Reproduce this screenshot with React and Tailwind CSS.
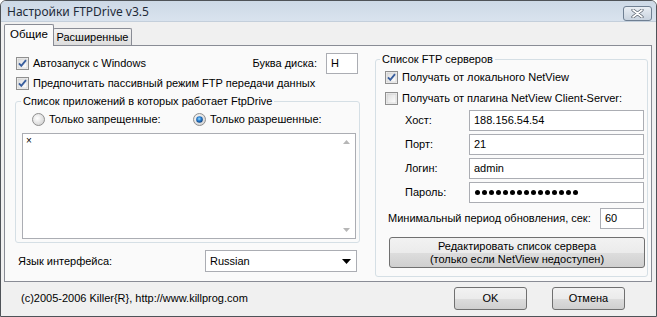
import React from "react";

const F = { fontFamily: '"Liberation Sans", Arial, sans-serif' };

function Check({ checked }) {
  return (
    <svg width="13" height="13" viewBox="0 0 13 13" className="shrink-0">
      <defs>
        <linearGradient id="cbg" x1="0" y1="0" x2="1" y2="1">
          <stop offset="0" stopColor="#dcdcdc" />
          <stop offset="1" stopColor="#ffffff" />
        </linearGradient>
      </defs>
      <rect x="0.5" y="0.5" width="12" height="12" fill="#f4f4f4" stroke="#8f8f8f" />
      <rect x="2" y="2" width="9" height="9" fill="url(#cbg)" stroke="#c8c8c8" strokeWidth="0.6" />
      {checked && (
        <path d="M3 6.3 L5.3 8.8 L10 3.2" fill="none" stroke="#3a5f9e" strokeWidth="1.9" />
      )}
    </svg>
  );
}

function Radio({ checked }) {
  return (
    <svg width="13" height="13" viewBox="0 0 13 13" className="shrink-0">
      <defs>
        <radialGradient id="rbg" cx="0.4" cy="0.4" r="0.7">
          <stop offset="0" stopColor="#ffffff" />
          <stop offset="1" stopColor="#cfcfcf" />
        </radialGradient>
        <radialGradient id="rdot" cx="0.45" cy="0.4" r="0.6">
          <stop offset="0" stopColor="#9fe0ff" />
          <stop offset="0.5" stopColor="#2a7fd0" />
          <stop offset="1" stopColor="#0c3f7c" />
        </radialGradient>
      </defs>
      <circle cx="6.5" cy="6.5" r="6" fill="url(#rbg)" stroke="#8f8f8f" />
      {checked && <circle cx="6.5" cy="6.5" r="3.3" fill="url(#rdot)" />}
    </svg>
  );
}

function Input({ value, className = "", password }) {
  return (
    <div
      className={`h-[21px] bg-white border border-[#abadb3] flex items-center pl-[4px] text-[11px] text-black ${className}`}
    >
      {password ? (
        <span className="flex gap-[2px] pl-[1px]">
          {Array.from({ length: 15 }).map((_, i) => (
            <span key={i} className="w-[5px] h-[5px] rounded-full bg-black inline-block" />
          ))}
        </span>
      ) : (
        value
      )}
    </div>
  );
}

function Button({ children, className = "" }) {
  return (
    <div
      className={`border border-[#707070] rounded-[3px] bg-[linear-gradient(#f2f2f2,#ebebeb_50%,#dddddd_51%,#cfcfcf)] flex flex-col items-center justify-center text-[11px] text-black leading-[13px] ${className}`}
    >
      {children}
    </div>
  );
}

export default function App() {
  return (
    <div
      style={F}
      className="w-[657px] h-[317px] border border-[#4f5358] rounded-t-[6px] overflow-hidden bg-[#f0f0f0] flex flex-col text-[11px] text-black"
    >
      {/* Title bar */}
      <div className="h-[21px] shrink-0 flex items-center pl-[6px] pr-[4px] bg-[linear-gradient(#cdd9e6,#d9e3ee)] border-b border-[#c4cfdb]">
        <span className="text-[12px] text-[#1e2a38] mt-[1px]" style={{ fontFamily: '"Noto Sans", "Open Sans", sans-serif' }}>
          Настройки FTPDrive v3.5
        </span>
        <div className="ml-auto mt-[4px] w-[29px] h-[15px] border border-[#6f7f92] rounded-[3px] bg-[linear-gradient(#e9eef4,#c9d3df)] flex items-center justify-center">
          <svg width="13" height="9" viewBox="0 0 13 9">
            <path d="M2 1 L11 8 M11 1 L2 8" stroke="#5b6470" strokeWidth="3.2" strokeLinecap="round" />
            <path d="M2 1 L11 8 M11 1 L2 8" stroke="#ffffff" strokeWidth="1.6" strokeLinecap="round" />
          </svg>
        </div>
      </div>

      {/* Body */}
      <div className="flex-1 flex flex-col pl-[3px] pt-[2px]">
        {/* Tabs */}
        <div className="flex items-end h-[22px] relative z-10 -mb-[1px]">
          <div className="h-[22px] w-[50px] bg-[#fafafa] border border-[#898c95] border-b-0 rounded-t-[2px] flex items-center justify-center text-[11.5px] pb-[1px]">
            Общие
          </div>
          <div className="h-[17px] w-[79px] -ml-[1px] mb-[1px] bg-[linear-gradient(#f3f3f3,#dddddd)] border border-[#898c95] border-b-0 rounded-t-[2px] flex items-center justify-center text-[11px]">
            Расширенные
          </div>
        </div>

        {/* Panel */}
        <div className="w-[648px] h-[237px] border border-[#898c95] bg-[#fafafa] flex">
          {/* Left column */}
          <div className="w-[362px] flex flex-col">
            <div className="mt-[7px] h-[21px] flex items-center pl-[11px]">
              <Check checked />
              <span className="ml-[4px]">Автозапуск с Windows</span>
              <span className="ml-auto mr-[9px]">Буква диска:</span>
              <Input value="H" className="w-[32px] mr-[9px]" />
            </div>
            <div className="mt-[2px] h-[14px] flex items-center pl-[11px]">
              <Check checked />
              <span className="ml-[4px]">Предпочитать пассивный режим FTP передачи данных</span>
            </div>
            <fieldset className="ml-[10px] mt-[5px] w-[345px] border border-[#d5dfe5] rounded-[3px] pb-[3px]">
              <legend className="ml-[5px] px-[2px] leading-[12px]">Список приложений в которых работает FtpDrive</legend>
              <div className="mt-[5px] h-[14px] flex items-center pl-[16px]">
                <div className="w-[161px] flex items-center">
                  <Radio />
                  <span className="ml-[4px]">Только запрещенные:</span>
                </div>
                <Radio checked />
                <span className="ml-[4px]">Только разрешенные:</span>
              </div>
              <div className="ml-[6px] mt-[7px] w-[334px] h-[106px] bg-white border border-[#abadb3] flex">
                <div className="flex-1 pl-[3px] pt-[1px] text-[10px] leading-[12px]">×</div>
                <div className="w-[17px] flex flex-col justify-between items-center py-[6px]">
                  <svg width="7" height="4" viewBox="0 0 7 4"><path d="M0 4 L3.5 0 L7 4Z" fill="#b6b6b6" /></svg>
                  <svg width="7" height="4" viewBox="0 0 7 4"><path d="M0 0 L3.5 4 L7 0Z" fill="#b6b6b6" /></svg>
                </div>
              </div>
            </fieldset>
            <div className="mt-[7px] h-[22px] flex items-center">
              <span className="ml-[13px]">Язык интерфейса:</span>
              <div className="ml-auto mr-[10px] w-[152px] h-[22px] bg-white border border-[#abadb3] flex items-center pl-[4px]">
                <span className="text-[11px]">Russian</span>
                <svg className="ml-auto mr-[5px]" width="9" height="5" viewBox="0 0 9 5"><path d="M0 0 L9 0 L4.5 5Z" fill="#000" /></svg>
              </div>
            </div>
          </div>

          {/* Right column */}
          <fieldset className="ml-[8px] mt-[7px] w-[273px] h-[224px] border border-[#d5dfe5] rounded-[3px]">
            <legend className="ml-[4px] px-[2px] leading-[12px]">Список FTP серверов</legend>
            <div className="mt-[5px] h-[14px] flex items-center pl-[9px]">
              <Check checked />
              <span className="ml-[4px]">Получать от локального NetView</span>
            </div>
            <div className="mt-[7px] h-[14px] flex items-center pl-[9px]">
              <Check />
              <span className="ml-[4px]">Получать от плагина NetView Client-Server:</span>
            </div>
            <div className="mt-[5px] flex flex-col gap-[3px]">
              {[
                ["Хост:", "188.156.54.54"],
                ["Порт:", "21"],
                ["Логин:", "admin"],
                ["Пароль:", null],
              ].map(([l, v]) => (
                <div key={l} className="flex items-center h-[21px]">
                  <span className="ml-[29px] w-[64px]">{l}</span>
                  <Input value={v} password={v === null} className="w-[175px]" />
                </div>
              ))}
            </div>
            <div className="mt-[5px] flex items-center h-[21px]">
              <span className="ml-[12px]">Минимальный период обновления, сек:</span>
              <Input value="60" className="ml-auto mr-[3px] w-[44px]" />
            </div>
            <Button className="ml-[13px] mt-[8px] w-[256px] h-[31px]">
              <span>Редактировать список сервера</span>
              <span>(только если NetView недоступен)</span>
            </Button>
          </fieldset>
        </div>

        {/* Footer */}
        <div className="flex items-center h-[23px] mt-[5px]">
          <span className="ml-[17px]">(c)2005-2006 Killer{"{R}"}, http://www.killprog.com</span>
          <Button className="ml-auto w-[73px] h-[23px]">OK</Button>
          <Button className="ml-[25px] mr-[31px] w-[73px] h-[23px]">Отмена</Button>
        </div>
      </div>
    </div>
  );
}
